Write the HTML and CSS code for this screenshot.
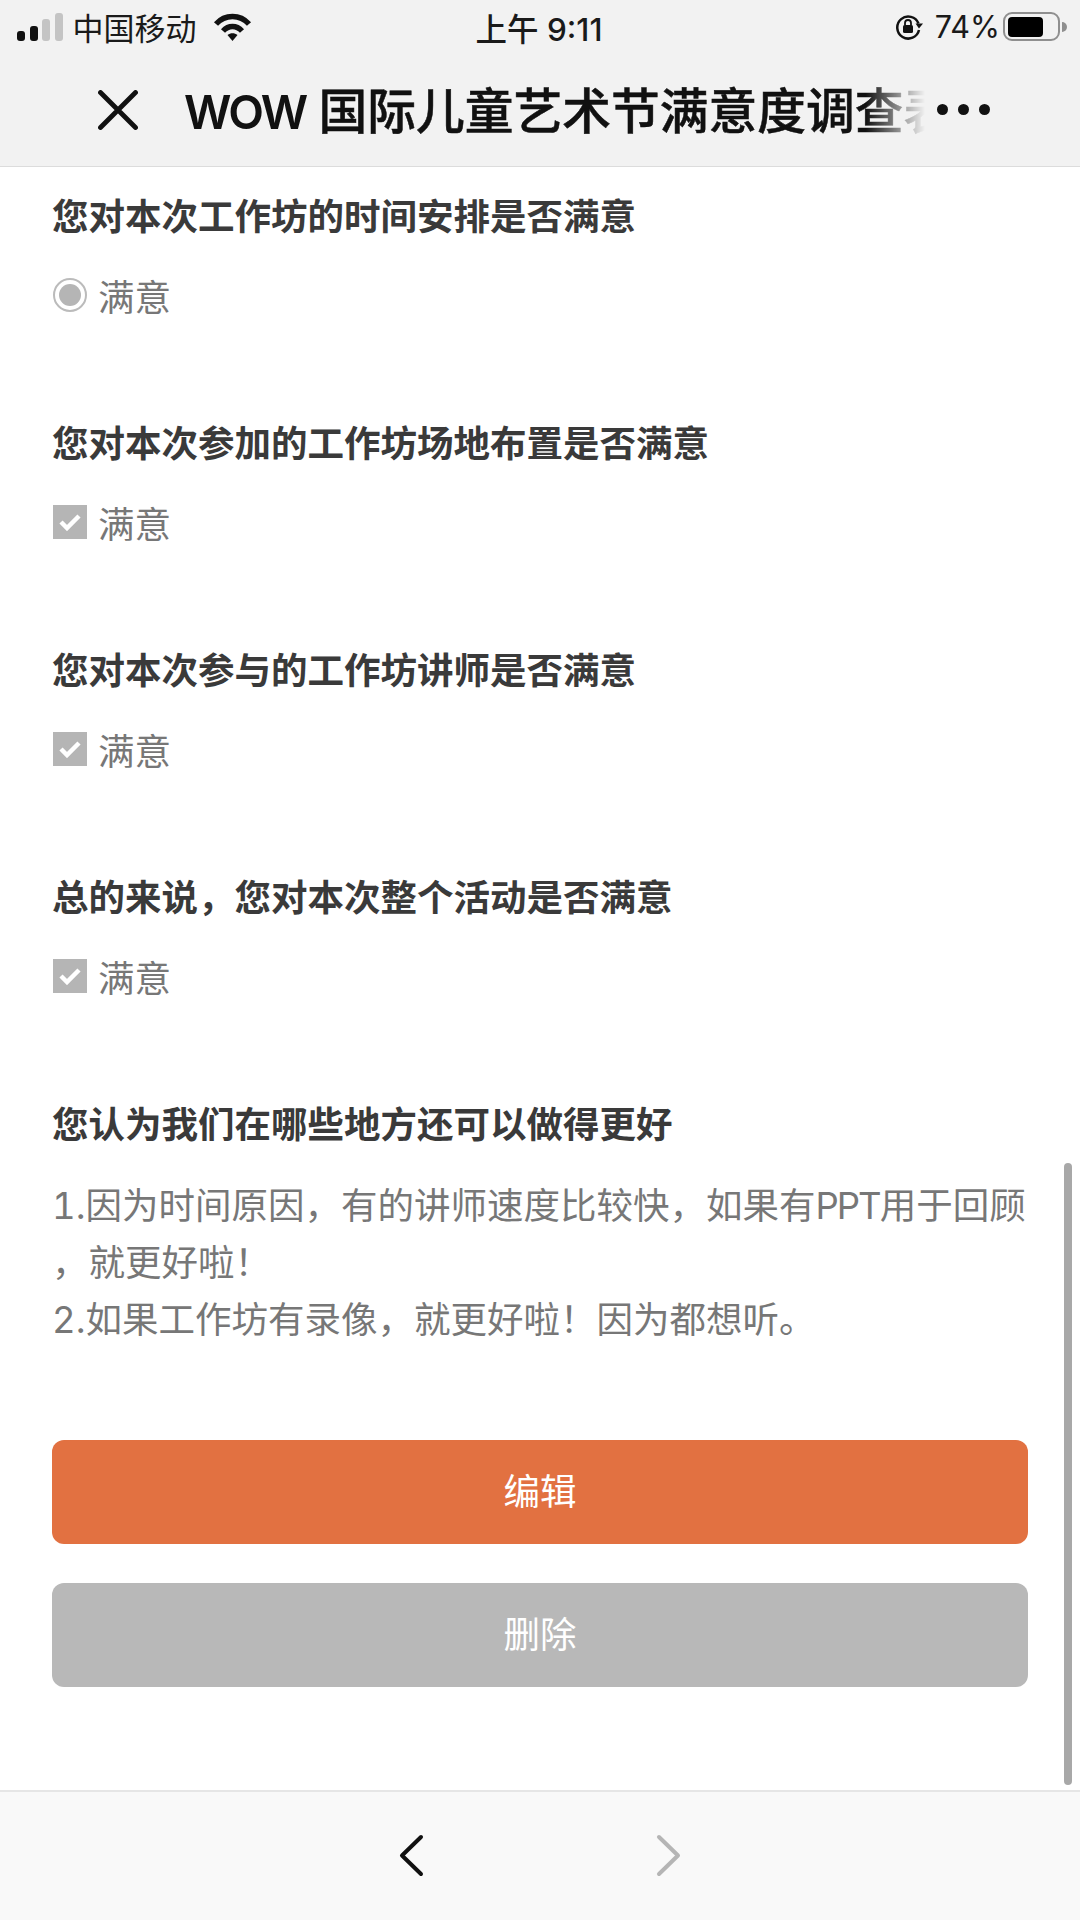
FILE: index.html
```html
<!DOCTYPE html>
<html lang="zh-CN">
<head>
    <meta charset="UTF-8">
    <meta name="viewport" content="width=device-width, initial-scale=1.0">
    <title>WOW 国际儿童艺术节满意度调查表</title>
    <link rel="stylesheet" href="styles.css">
</head>
<body>
    <div class="page">
        <header class="top-bar">
            <div class="status-bar">
                <div class="status-left">
                    <div class="signal">
                        <span class="bar bar-1"></span>
                        <span class="bar bar-2"></span>
                        <span class="bar bar-3"></span>
                        <span class="bar bar-4"></span>
                    </div>
                    <span class="carrier">中国移动</span>
                    <svg class="wifi" width="39" height="29" viewBox="0 0 39 29">
                        <path d="M3 12C12 2 27 2 36 12" fill="none" stroke="#111" stroke-width="5.500"/>
                        <path d="M10 19C15.500 13 23.500 13 29 19" fill="none" stroke="#111" stroke-width="5.500"/>
                        <path d="M14.500 23C17.500 20.500 21.500 20.500 24.500 23L19.500 29Z" fill="#111"/>
                    </svg>
                </div>
                <div class="clock">上午 9:11</div>
                <div class="status-right">
                    <svg class="rot-lock" width="28" height="26" viewBox="0 0 28 26">
                        <path d="M23.500 9.500A11 11 0 1 0 24 16" fill="none" stroke="#111" stroke-width="2.500"/>
                        <path d="M20.500 9.500H28L24 14.500Z" fill="#111"/>
                        <rect x="8" y="11" width="10" height="8" rx="1.500" fill="#111"/>
                        <path d="M10 11V9a3 3 0 0 1 6 0v2" fill="none" stroke="#111" stroke-width="1.800"/>
                    </svg>
                    <span class="battery-pct">74%</span>
                    <div class="battery">
                        <div class="battery-fill"></div>
                    </div>
                    <span class="battery-nub"></span>
                </div>
            </div>
            <nav class="nav-bar">
                <svg class="close-icon" width="40" height="40" viewBox="0 0 40 40">
                    <path d="M2.500 2.500L37.500 37.500M37.500 2.500L2.500 37.500" fill="none" stroke="#111" stroke-width="4.800" stroke-linecap="round"/>
                </svg>
                <h1 class="nav-title"><span class="nav-latin">WOW</span> 国际儿童艺术节满意度调查表</h1>
                <div class="more-dots">
                    <span></span>
                    <span></span>
                    <span></span>
                </div>
            </nav>
        </header>

        <main class="content">
            <section class="question">
                <h2>您对本次工作坊的时间安排是否满意</h2>
                <div class="option">
                    <span class="radio"><span class="radio-dot"></span></span>
                    <span>满意</span>
                </div>
            </section>
            <section class="question">
                <h2>您对本次参加的工作坊场地布置是否满意</h2>
                <div class="option">
                    <span class="check"><svg width="22" height="18" viewBox="0 0 22 18"><path d="M2 9L8 15L20 3" fill="none" stroke="#fff" stroke-width="4.500"/></svg></span>
                    <span>满意</span>
                </div>
            </section>
            <section class="question">
                <h2>您对本次参与的工作坊讲师是否满意</h2>
                <div class="option">
                    <span class="check"><svg width="22" height="18" viewBox="0 0 22 18"><path d="M2 9L8 15L20 3" fill="none" stroke="#fff" stroke-width="4.500"/></svg></span>
                    <span>满意</span>
                </div>
            </section>
            <section class="question">
                <h2>总的来说，您对本次整个活动是否满意</h2>
                <div class="option">
                    <span class="check"><svg width="22" height="18" viewBox="0 0 22 18"><path d="M2 9L8 15L20 3" fill="none" stroke="#fff" stroke-width="4.500"/></svg></span>
                    <span>满意</span>
                </div>
            </section>
            <section class="question question-text">
                <h2>您认为我们在哪些地方还可以做得更好</h2>
                <p class="answer">1.因为时间原因，有的讲师速度比较快，如果有<span class="answer-latin">PPT</span>用于回顾<br>，就更好啦！<br>2.如果工作坊有录像，就更好啦！因为都想听。</p>
            </section>
            <div class="actions">
                <button type="button" class="btn btn-edit">编辑</button>
                <button type="button" class="btn btn-delete">删除</button>
            </div>
            <div class="scroll-thumb"></div>
        </main>

        <footer class="bottom-bar">
            <svg width="26" height="46" viewBox="0 0 26 46">
                <path d="M22 3L3 21.500L22 40" fill="none" stroke="#111" stroke-width="4" stroke-linecap="round" stroke-linejoin="round"/>
            </svg>
            <svg width="26" height="46" viewBox="0 0 26 46">
                <path d="M4 3L23 21.500L4 40" fill="none" stroke="#b5b5b5" stroke-width="4" stroke-linecap="round" stroke-linejoin="round"/>
            </svg>
        </footer>
    </div>
</body>
</html>
```

FILE: styles.css
```css
* {
    box-sizing: border-box;
}

body {
    margin: 0;
    padding: 0;
    font-family: Inter, "Noto Sans CJK SC", sans-serif;
    background-color: #fff;
}

.page {
    width: 1080px;
    height: 1920px;
    display: flex;
    flex-direction: column;
    overflow: hidden;
}

/* Top bar */
.top-bar {
    height: 167px;
    background-color: #f2f2f2;
    border-bottom: 1px solid #dcdcdc;
}

.status-bar {
    height: 53px;
    padding: 0 13px 0 17px;
    display: grid;
    grid-template-columns: 1fr auto 1fr;
    align-items: center;
    color: #1a1a1a;
    font-size: 31px;
}

.status-left {
    display: flex;
    align-items: center;
}

.signal {
    display: flex;
    align-items: flex-end;
    gap: 4.500px;
    height: 28px;
    margin-right: 10px;
}

.bar {
    width: 8px;
    border-radius: 3px;
    background-color: #111;
}

.bar-1 {
    height: 10px;
}

.bar-2 {
    height: 15px;
}

.bar-3 {
    height: 22px;
    background-color: #c4c4c4;
}

.bar-4 {
    height: 28px;
    background-color: #c4c4c4;
}

.carrier {
    margin-right: 16px;
}

.clock {
    margin-right: 6px;
    font-size: 31.500px;
    font-weight: 500;
}

.status-right {
    display: flex;
    align-items: center;
    justify-content: flex-end;
}

.rot-lock {
    margin-right: 12px;
}

.battery-pct {
    margin-right: 3px;
    font-size: 30.500px;
}

.battery {
    width: 57px;
    height: 29px;
    padding: 0 2.500px;
    display: flex;
    align-items: center;
    border: 2.500px solid #8f8f8f;
    border-radius: 9px;
}

.battery-fill {
    width: 35px;
    height: 20px;
    border-radius: 4px;
    background-color: #000;
}

.battery-nub {
    width: 5px;
    height: 10px;
    margin-left: 2px;
    border-radius: 0 5px 5px 0;
    background-color: #8f8f8f;
}

.nav-bar {
    height: 113px;
    padding: 0 90px 0 98px;
    display: flex;
    align-items: center;
}

.close-icon {
    flex-shrink: 0;
    margin-right: 46px;
}

.nav-title {
    margin: 0;
    width: 741px;
    padding-bottom: 4px;
    flex-shrink: 0;
    overflow: hidden;
    white-space: nowrap;
    font-size: 48.750px;
    font-weight: 500;
    color: #111;
    -webkit-text-stroke: 0.5px #111;
    -webkit-mask-image: linear-gradient(to right, #000 92%, transparent 100%);
    mask-image: linear-gradient(to right, #000 92%, transparent 100%);
}

.nav-latin {
    font-size: 46.500px;
    font-weight: 600;
    letter-spacing: -2.500px;
    -webkit-text-stroke: 0;
}

.more-dots {
    display: flex;
    gap: 10px;
    margin-left: auto;
}

.more-dots span {
    width: 11px;
    height: 11px;
    border-radius: 50%;
    background-color: #111;
}

/* Content */
.content {
    position: relative;
    flex: 1;
    padding: 25px 52px 0;
}

.question {
    height: 227px;
}

.question h2 {
    margin: 0;
    font-size: 36.500px;
    line-height: 50px;
    font-weight: 700;
    color: #3a3a3a;
}

.option {
    display: flex;
    align-items: center;
    gap: 11px;
    height: 50px;
    margin-top: 28px;
    font-size: 36.500px;
    color: #777;
}

.radio {
    width: 34px;
    height: 34px;
    margin-left: 1px;
    border: 2px solid #bbb;
    border-radius: 50%;
    display: flex;
    align-items: center;
    justify-content: center;
}

.radio-dot {
    width: 22px;
    height: 22px;
    border-radius: 50%;
    background-color: #b5b5b5;
}

.check {
    width: 34px;
    height: 34px;
    margin-left: 1px;
    display: flex;
    align-items: center;
    justify-content: center;
    background-color: #b5b5b5;
}

.question-text {
    height: auto;
}

.answer {
    margin: 28px 0 0;
    font-size: 36.500px;
    line-height: 57px;
    white-space: nowrap;
    color: #777;
    font-variant-numeric: tabular-nums;
}

.answer-latin {
    letter-spacing: -2px;
}

.actions {
    display: flex;
    flex-direction: column;
    gap: 39px;
    margin-top: 91px;
}

.btn {
    width: 976px;
    height: 104px;
    padding: 0 0 6px;
    border: none;
    border-radius: 12px;
    font-family: inherit;
    font-size: 36.500px;
    color: #fff;
}

.btn-edit {
    background-color: #e27141;
}

.btn-delete {
    background-color: #b8b8b8;
}

.scroll-thumb {
    position: absolute;
    top: 996px;
    right: 8px;
    width: 8px;
    height: 622px;
    border-radius: 4px;
    background-color: #a8a8a8;
}

/* Bottom bar */
.bottom-bar {
    height: 130px;
    padding: 42px 399px 0;
    display: flex;
    justify-content: space-between;
    align-items: flex-start;
    background-color: #f9f9f9;
    border-top: 2px solid #e6e6e6;
}
```
